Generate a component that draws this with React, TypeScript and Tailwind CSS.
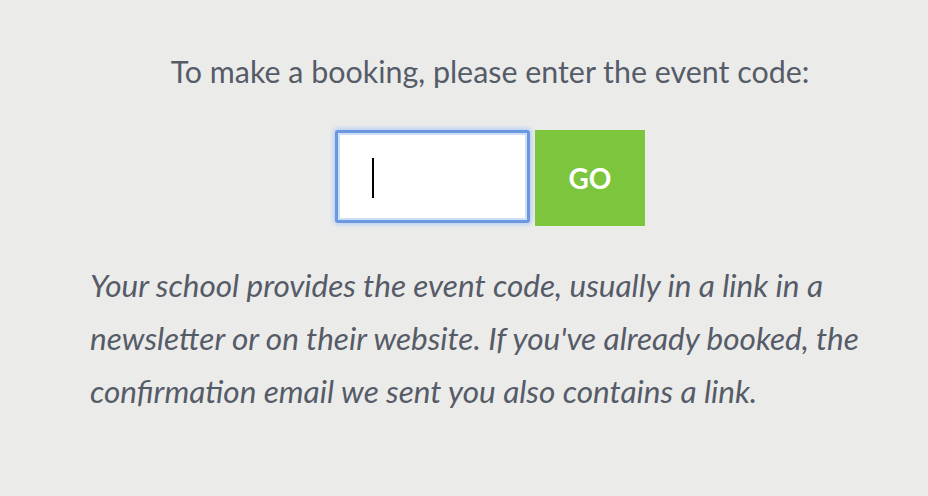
export default function App() {
  return (
    <div className="min-h-[496px] w-full bg-[#ebebea] [font-family:Lato,'Noto_Sans',sans-serif]">
      <div className="ml-[90px] w-[800px] pt-[51px]">
        <p className="text-center text-[30.4px] leading-[40px] text-[#565b68]">
          To make a booking, please enter the event code:
        </p>
        <div className="mt-[39px] flex justify-center">
          <div className="flex items-start">
            <div className="flex h-[93px] w-[195px] items-center rounded-[3px] border-[3px] border-[#6c98e0] bg-white pl-[34px] shadow-[0_0_4px_2px_#bcd1f3,inset_0_0_0_2px_#cddff7]">
              <div className="mt-[3px] h-[40px] w-[2px] bg-black" />
            </div>
            <button className="ml-[5px] h-[96px] w-[110px] bg-[#7dc53d] text-[28px] font-bold text-white">
              GO
            </button>
          </div>
        </div>
        <p className="mt-[33px] text-[31.5px] italic leading-[53px] text-[#565b68]">
          Your school provides the event code, usually in a link in a
          <br />
          newsletter or on their website. If you've already booked, the
          <br />
          confirmation email we sent you also contains a link.
        </p>
      </div>
    </div>
  );
}
